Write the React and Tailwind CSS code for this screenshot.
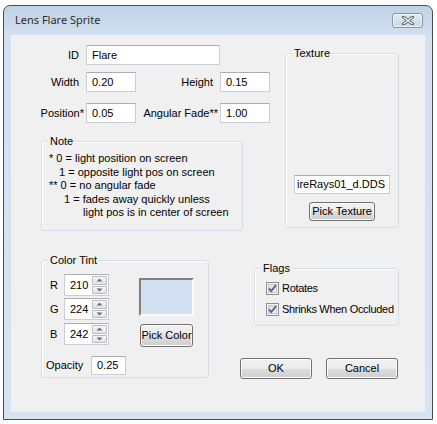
import React from 'react';

function Field({ className = '', children }) {
  return (
    <div className={'flex items-center overflow-hidden whitespace-nowrap bg-white border border-[#c9ced5] border-t-[#abadb3] pl-[5px] text-black ' + className}>
      {children}
    </div>
  );
}

function Btn({ className = '', children }) {
  return (
    <div className={'flex items-center justify-center whitespace-nowrap rounded-[3px] border border-[#707070] bg-[linear-gradient(to_bottom,#f2f2f2_0%,#ebebeb_50%,#dddddd_50%,#cfcfcf_100%)] shadow-[inset_0_0_0_1px_#fbfbfb] text-black ' + className}>
      {children}
    </div>
  );
}

function Group({ label, className = '', children }) {
  return (
    <div className={'relative rounded-[3px] border border-[#d5dfe5] shadow-[inset_1px_1px_0_#ffffff] ' + className}>
      <span className="absolute -top-[8px] left-[6px] bg-[#f0f0f0] px-[2px] leading-[14px]">{label}</span>
      {children}
    </div>
  );
}

function Arrow({ up }) {
  return (
    <svg width="7" height="4" viewBox="0 0 7 4">
      <path d={up ? 'M0.5 3.5 L3.5 0.5 L6.5 3.5 Z' : 'M0.5 0.5 L3.5 3.5 L6.5 0.5 Z'} fill="#5a6f9c" />
    </svg>
  );
}

function Spinner({ label, value, className = '' }) {
  return (
    <div className={'flex items-center h-[22px] ' + className}>
      <span className="w-[14px]">{label}</span>
      <div className="flex h-full w-[45px] border border-[#c9ced5] border-t-[#abadb3] bg-white">
        <div className="flex flex-1 items-center pl-[5px]">{value}</div>
        <div className="flex w-[17px] flex-col gap-[1px] p-[1px]">
          <div className="flex flex-1 items-center justify-center rounded-[1px] border border-[#b9bcc1] bg-[linear-gradient(to_bottom,#f7f7f7,#e3e3e3)]">
            <Arrow up />
          </div>
          <div className="flex flex-1 items-center justify-center rounded-[1px] border border-[#b9bcc1] bg-[linear-gradient(to_bottom,#f7f7f7,#e3e3e3)]">
            <Arrow />
          </div>
        </div>
      </div>
    </div>
  );
}

function Check({ label, className = '' }) {
  return (
    <div className={'flex items-center h-[13px] whitespace-nowrap ' + className}>
      <svg width="13" height="13" viewBox="0 0 13 13" className="shrink-0">
        <defs>
          <linearGradient id="cbg" x1="0" y1="0" x2="1" y2="1">
            <stop offset="0" stopColor="#dcdcdc" />
            <stop offset="1" stopColor="#f8f8f8" />
          </linearGradient>
        </defs>
        <rect x="0.5" y="0.5" width="12" height="12" fill="#f4f4f4" stroke="#8e8f8f" />
        <rect x="2.5" y="2.5" width="8" height="8" fill="url(#cbg)" stroke="#c4c6c9" />
        <path d="M3 6.5 L5.3 9 L10 3.2" fill="none" stroke="#5065a3" strokeWidth="1.9" />
      </svg>
      <span className="ml-[3px] tracking-[-0.3px]">{label}</span>
    </div>
  );
}

export default function App() {
  return (
    <div className="min-h-screen bg-white pl-[3px] pt-[5px] font-['Liberation_Sans',Arial,sans-serif] text-[11px] text-black">
      <div className="flex h-[415px] w-[430px] flex-col rounded-t-[7px] border border-[#4a4f55] bg-[linear-gradient(to_bottom,#bfd2e6,#d3e1f0_32px,#d6e3f1)]">
        <div className="flex h-[29px] items-center justify-between pl-[11px] pr-[9px]">
          <span className="font-['Noto_Sans',sans-serif] text-[11px] text-[#2d2d2d]">Lens Flare Sprite</span>
          <div className="mb-[1px] flex h-[15px] w-[31px] items-center justify-center rounded-[3px] border border-[#8693a3] bg-[linear-gradient(to_bottom,#e3ebf4,#c8d5e4)] shadow-[inset_0_0_0_1px_#eef3f8]">
            <svg width="12" height="9" viewBox="0 0 12 9">
              <path d="M1.5 1 L10.5 8 M10.5 1 L1.5 8" stroke="#5b6470" strokeWidth="3.2" strokeLinecap="square" />
              <path d="M1.5 1 L10.5 8 M10.5 1 L1.5 8" stroke="#f4f6f9" strokeWidth="1.4" />
            </svg>
          </div>
        </div>

        <div className="mx-[7px] h-[377px] bg-[#f0f0f0]">
          <div className="flex items-start">
            <div className="flex w-[274px] flex-col">
              <div className="mt-[10px] flex h-[20px] items-center">
                <span className="w-[68px] text-right">ID</span>
                <Field className="ml-[7px] h-[20px] w-[134px]">Flare</Field>
              </div>
              <div className="mt-[7px] flex h-[20px] items-center">
                <span className="w-[68px] text-right">Width</span>
                <Field className="ml-[7px] h-[20px] w-[50px]">0.20</Field>
                <span className="w-[77px] text-right">Height</span>
                <Field className="ml-[7px] h-[20px] w-[50px]">0.15</Field>
              </div>
              <div className="mt-[11px] flex h-[20px] items-center">
                <span className="w-[73px] text-right">Position*</span>
                <Field className="ml-[2px] h-[20px] w-[50px]">0.05</Field>
                <span className="w-[82px] text-right">Angular Fade**</span>
                <Field className="ml-[2px] h-[20px] w-[50px]">1.00</Field>
              </div>
              <Group label="Note" className="ml-[30px] mt-[18px] h-[90px] w-[202px]">
                <div className="pt-[10px] leading-[13.5px]">
                  <div className="pl-[7px]">* 0 = light position on screen</div>
                  <div className="pl-[17px]">1 = opposite light pos on screen</div>
                  <div className="pl-[7px]">** 0 = no angular fade</div>
                  <div className="pl-[22px]">1 = fades away quickly unless</div>
                  <div className="pl-[41px]">light pos is in center of screen</div>
                </div>
              </Group>
            </div>
            <Group label="Texture" className="mt-[18px] flex h-[175px] w-[114px] flex-col items-center justify-end pb-[6px]">
              <Field className="h-[19px] w-[96px] justify-end pr-[4px]">ireRays01_d.DDS</Field>
              <Btn className="mt-[8px] h-[19px] w-[66px]">Pick Texture</Btn>
            </Group>
          </div>

          <div className="mt-[29px] flex items-start">
            <Group label="Color Tint" className="ml-[30px] h-[118px] w-[168px]">
              <div className="flex pl-[8px] pt-[13px]">
                <div className="flex flex-col">
                  <Spinner label="R" value="210" />
                  <Spinner label="G" value="224" className="mt-[2px]" />
                  <Spinner label="B" value="242" className="mt-[3px]" />
                </div>
                <div className="ml-[30px] flex flex-col">
                  <div className="mt-[4px] h-[38px] w-[55px] border-2 border-b-[#fbfbfb] border-l-[#808080] border-r-[#fbfbfb] border-t-[#808080] bg-[#d2e0f2]" />
                  <Btn className="ml-[1px] mt-[8px] h-[23px] w-[53px]">Pick Color</Btn>
                </div>
              </div>
              <div className="mt-[9px] flex items-center pl-[4px]">
                <span className="w-[45px]">Opacity</span>
                <Field className="h-[19px] w-[35px]">0.25</Field>
              </div>
            </Group>

            <div className="ml-[31px] flex flex-col">
              <Group label="Flags" className="ml-[14px] mt-[8px] h-[58px] w-[145px]">
                <div className="flex flex-col pl-[11px] pt-[13px]">
                  <Check label="Rotates" />
                  <Check label="Shrinks When Occluded" className="mt-[8px]" />
                </div>
              </Group>
              <div className="mt-[32px] flex gap-[14px]">
                <Btn className="h-[21px] w-[72px]">OK</Btn>
                <Btn className="h-[21px] w-[72px]">Cancel</Btn>
              </div>
            </div>
          </div>
        </div>
      </div>
    </div>
  );
}
